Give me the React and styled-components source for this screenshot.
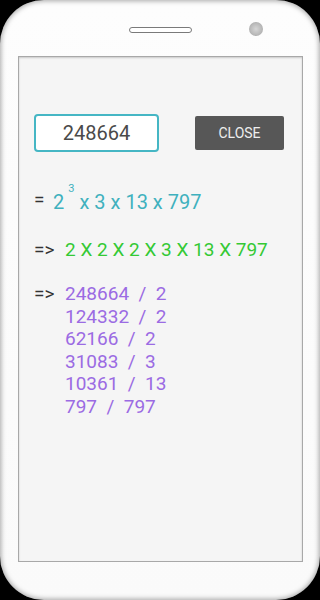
import React from "react";
import styled, { createGlobalStyle } from "styled-components";

const Global = createGlobalStyle`
  html, body { margin: 0; padding: 0; background: #000; }
  body { font-family: Roboto, "Liberation Sans", sans-serif; }
`;

const Phone = styled.div`
  width: 320px;
  height: 600px;
  box-sizing: border-box;
  border-radius: 44px;
  background: linear-gradient(180deg, #fdfdfd 0%, #fafafa 100%);
  box-shadow: inset 0 0 5px 1px rgba(0, 0, 0, 0.35);
  display: flex;
  flex-direction: column;
`;

const TopBar = styled.div`
  height: 56px;
  display: grid;
  grid-template-columns: 1fr auto 1fr;
  align-items: center;
  padding-top: 4px;
  box-sizing: border-box;
`;

const Speaker = styled.div`
  grid-column: 2;
  width: 63px;
  height: 6px;
  box-sizing: border-box;
  border: 1.5px solid #7a7a7a;
  border-radius: 4px;
  background: #fff;
`;

const Camera = styled.div`
  grid-column: 3;
  justify-self: start;
  margin-left: 57px;
  margin-top: -3px;
  width: 14px;
  height: 14px;
  border-radius: 50%;
  background: radial-gradient(circle at 50% 50%, #d6d6d6 0%, #b8b8b8 60%, #9a9a9a 100%);
`;

const Screen = styled.div`
  margin: 0 17px 0 18px;
  height: 506px;
  box-sizing: border-box;
  border: 1px solid #a8a8a8;
  box-shadow: inset 0 1px 2px rgba(0, 0, 0, 0.18);
  background: #f5f5f5;
  padding: 57px 0 0 15px;
  display: flex;
  flex-direction: column;
`;

const Row = styled.div`
  display: flex;
  align-items: center;
`;

const NumberBox = styled.div`
  width: 125px;
  height: 38px;
  box-sizing: border-box;
  border: 2px solid #45b6c4;
  border-radius: 4px;
  background: #fff;
  display: flex;
  align-items: center;
  justify-content: center;
  font-size: 20px;
  color: #4a4a4a;
`;

const CloseButton = styled.button`
  margin-left: 36px;
  width: 89px;
  height: 34px;
  border: none;
  border-radius: 2px;
  background: #575757;
  color: #eeeeee;
  font-family: Roboto, "Liberation Sans", sans-serif;
  font-size: 14px;
  padding: 0;
`;

const Line = styled.div`
  margin-top: ${(p) => p.$gap}px;
  display: flex;
  align-items: flex-start;
  font-size: 19px;
  line-height: 22px;
  height: ${(p) => (p.$fixed ? "22px" : "auto")};
  white-space: pre;
`;

const Prefix = styled.span`
  color: #333;
  width: ${(p) => p.$w}px;
  flex: none;
`;

const Value = styled.span`
  color: ${(p) => p.$color};
  font-size: ${(p) => p.$size || 19}px;
`;

const Sup = styled.span`
  font-size: 11px;
  line-height: 0;
  vertical-align: 17px;
  margin: 0 5px 0 4px;
`;

const Steps = styled.div`
  display: flex;
  flex-direction: column;
  color: #9b6be3;
  line-height: 22.5px;
`;

const steps = ["248664  /  2", "124332  /  2", "62166  /  2", "31083  /  3", "10361  /  13", "797  /  797"];

export default function App() {
  return (
    <>
      <Global />
      <Phone>
        <TopBar>
          <Speaker />
          <Camera />
        </TopBar>
        <Screen>
          <Row>
            <NumberBox>248664</NumberBox>
            <CloseButton>CLOSE</CloseButton>
          </Row>
          <Line $gap={37} $fixed>
            <Prefix $w={19}>=</Prefix>
            <Value $color="#3fb1be" $size={20}>
              2<Sup>3</Sup>x 3 x 13 x 797
            </Value>
          </Line>
          <Line $gap={28} $fixed>
            <Prefix $w={31}>{"=>"}</Prefix>
            <Value $color="#34c934">2 X 2 X 2 X 3 X 13 X 797</Value>
          </Line>
          <Line $gap={22}>
            <Prefix $w={31}>{"=>"}</Prefix>
            <Steps>
              {steps.map((s) => (
                <span key={s}>{s}</span>
              ))}
            </Steps>
          </Line>
        </Screen>
      </Phone>
    </>
  );
}
